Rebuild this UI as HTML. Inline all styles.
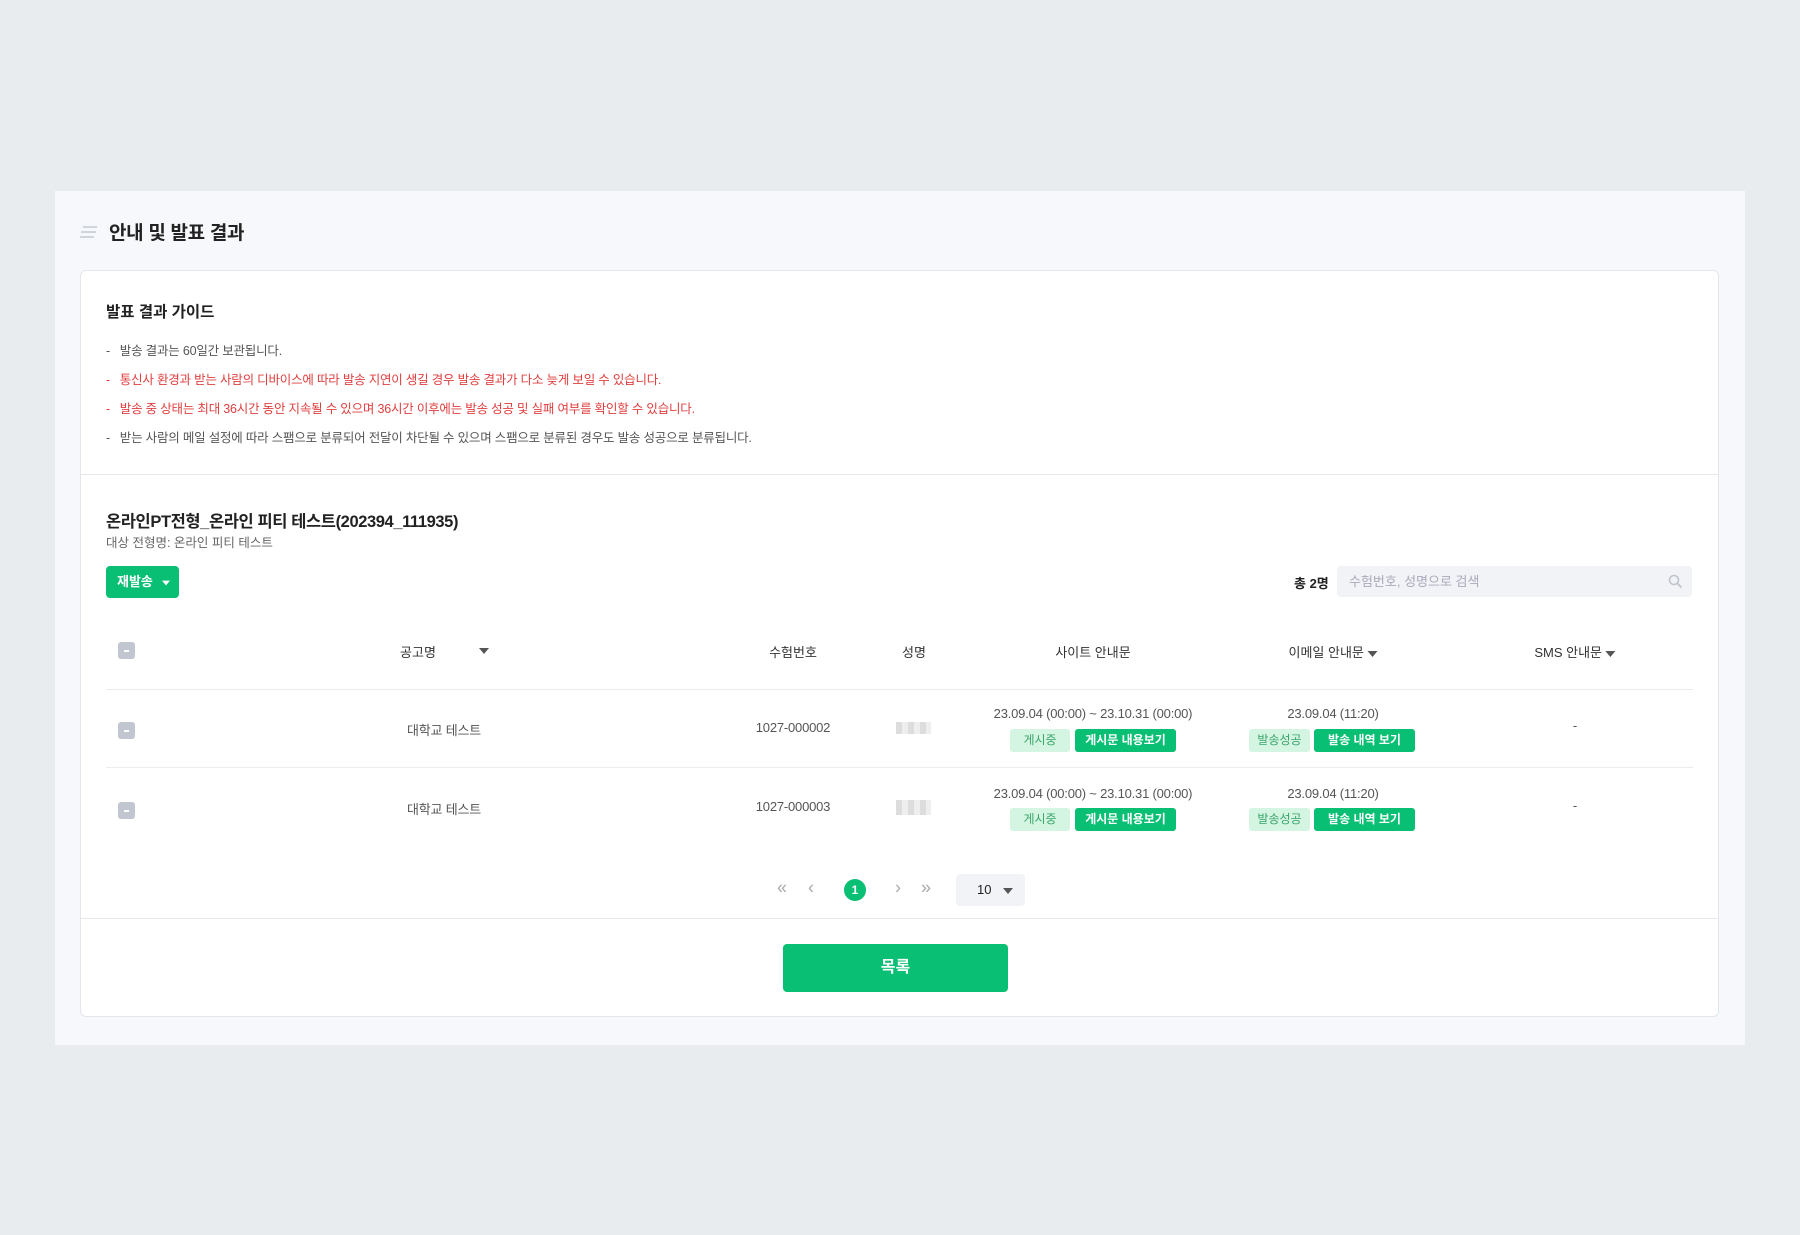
<!DOCTYPE html>
<html><head><meta charset="utf-8"><style>
*{box-sizing:border-box;margin:0;padding:0}
body{width:1800px;height:1235px;background:#e8ecef;font-family:"Liberation Sans","Noto Sans CJK KR",sans-serif;color:#222;position:relative;overflow:hidden}
.a{position:absolute;white-space:nowrap}
.panel{position:absolute;left:55px;top:191px;width:1690px;height:854px;background:#f6f8fb}
.card{position:absolute;left:80px;top:270px;width:1639px;height:747px;background:#fff;border:1px solid #e3e7ec;border-radius:6px}
.li{font-size:12.5px;color:#555;letter-spacing:-0.2px}
.red{color:#e03e3e}
.hd{font-size:13px;color:#333;transform:translateX(-50%)}
.cb{position:absolute;width:17px;height:17px;background:#c2c6d0;border-radius:3px}
.cb:after{content:"";position:absolute;left:6px;top:8px;width:5px;height:1.5px;background:#fff}
.c{transform:translateX(-50%);font-size:13px;color:#555;letter-spacing:-0.2px}
.b{position:absolute;height:23px;line-height:23px;font-size:12px;text-align:center;border-radius:3px}
.lt{background:#d4f5e2;color:#3aa46a}
.dk{background:#08bf73;color:#fff;font-weight:bold}
.tri{display:inline-block;width:0;height:0;border-left:5px solid transparent;border-right:5px solid transparent;border-top:6px solid #555;vertical-align:middle}
.pg{font-size:18px;color:#aaa;transform:translate(-50%,-50%)}
</style></head><body>
<div class="panel"></div>
<svg class="a" style="left:80px;top:226px" width="18" height="12"><path d="M3 1h14M1 6h15M0 11h14" stroke="#c4c9d2" stroke-width="1.6"/></svg>
<div class="a" style="left:109px;top:218px;font-size:19px;font-weight:bold;color:#222;letter-spacing:-0.3px">안내 및 발표 결과</div>
<div class="card"></div>
<div class="a" style="left:106px;top:300px;font-size:15.5px;font-weight:bold">발표 결과 가이드</div>
<div class="a li" style="left:106px;top:340px">-&nbsp;&nbsp; 발송 결과는 60일간 보관됩니다.</div>
<div class="a li red" style="left:106px;top:369px">-&nbsp;&nbsp; 통신사 환경과 받는 사람의 디바이스에 따라 발송 지연이 생길 경우 발송 결과가 다소 늦게 보일 수 있습니다.</div>
<div class="a li red" style="left:106px;top:398px">-&nbsp;&nbsp; 발송 중 상태는 최대 36시간 동안 지속될 수 있으며 36시간 이후에는 발송 성공 및 실패 여부를 확인할 수 있습니다.</div>
<div class="a li" style="left:106px;top:427px">-&nbsp;&nbsp; 받는 사람의 메일 설정에 따라 스팸으로 분류되어 전달이 차단될 수 있으며 스팸으로 분류된 경우도 발송 성공으로 분류됩니다.</div>
<div class="a" style="left:81px;top:474px;width:1637px;height:1px;background:#e6e8eb"></div>
<div class="a" style="left:106px;top:508px;font-size:16.5px;font-weight:bold;letter-spacing:-0.4px">온라인PT전형_온라인 피티 테스트(202394_111935)</div>
<div class="a" style="left:106px;top:532px;font-size:12.5px;color:#666">대상 전형명: 온라인 피티 테스트</div>
<div class="a" style="left:106px;top:566px;width:73px;height:32px;background:#08bf73;border-radius:4px;color:#fff;font-size:13px;line-height:32px;padding-left:11px;font-weight:bold">재발송 <span class="tri" style="border-top-color:#fff;margin-left:4px;transform:scale(.8)"></span></div>
<div class="a" style="left:1294px;top:573px;font-size:13px;font-weight:bold">총 2명</div>
<div class="a" style="left:1337px;top:566px;width:355px;height:31px;background:#f1f3f6;border-radius:4px;font-size:13px;color:#aab;line-height:31px;padding-left:12px">수험번호, 성명으로 검색</div>
<svg class="a" style="left:1668px;top:574px" width="15" height="15"><circle cx="6" cy="6" r="4.5" stroke="#c0c4cc" stroke-width="1.6" fill="none"/><path d="M9.5 9.5l4 4" stroke="#c0c4cc" stroke-width="1.8"/></svg>
<div class="cb" style="left:118px;top:642px"></div>
<div class="a hd" style="left:418px;top:642px">공고명</div><span class="a tri" style="left:479px;top:648px"></span>
<div class="a hd" style="left:793px;top:642px">수험번호</div>
<div class="a hd" style="left:914px;top:642px">성명</div>
<div class="a hd" style="left:1093px;top:642px">사이트 안내문</div>
<div class="a hd" style="left:1333px;top:642px">이메일 안내문 <span class="tri"></span></div>
<div class="a hd" style="left:1575px;top:642px">SMS 안내문 <span class="tri"></span></div>
<div class="a" style="left:106px;top:689px;width:1587px;height:1px;background:#eaecef"></div>
<div class="a" style="left:106px;top:767px;width:1587px;height:1px;background:#eaecef"></div>
<!-- row1 -->
<div class="cb" style="left:118px;top:722px"></div>
<div class="a c" style="left:444px;top:720px">대학교 테스트</div>
<div class="a c" style="left:793px;top:720px">1027-000002</div>
<div class="a" style="left:896px;top:722px;width:35px;height:12px;background:repeating-linear-gradient(90deg,#ddd 0 6px,#eee 6px 12px)"></div>
<div class="a c" style="left:1093px;top:706px">23.09.04 (00:00) ~ 23.10.31 (00:00)</div>
<div class="b lt" style="left:1010px;top:729px;width:60px">게시중</div>
<div class="b dk" style="left:1075px;top:729px;width:101px">게시문 내용보기</div>
<div class="a c" style="left:1333px;top:706px">23.09.04 (11:20)</div>
<div class="b lt" style="left:1249px;top:729px;width:61px">발송성공</div>
<div class="b dk" style="left:1314px;top:729px;width:101px">발송 내역 보기</div>
<div class="a c" style="left:1575px;top:718px">-</div>
<!-- row2 -->
<div class="cb" style="left:118px;top:802px"></div>
<div class="a c" style="left:444px;top:799px">대학교 테스트</div>
<div class="a c" style="left:793px;top:799px">1027-000003</div>
<div class="a" style="left:896px;top:800px;width:35px;height:15px;background:repeating-linear-gradient(90deg,#ddd 0 6px,#eee 6px 12px)"></div>
<div class="a c" style="left:1093px;top:786px">23.09.04 (00:00) ~ 23.10.31 (00:00)</div>
<div class="b lt" style="left:1010px;top:808px;width:60px">게시중</div>
<div class="b dk" style="left:1075px;top:808px;width:101px">게시문 내용보기</div>
<div class="a c" style="left:1333px;top:786px">23.09.04 (11:20)</div>
<div class="b lt" style="left:1249px;top:808px;width:61px">발송성공</div>
<div class="b dk" style="left:1314px;top:808px;width:101px">발송 내역 보기</div>
<div class="a c" style="left:1575px;top:798px">-</div>
<!-- pagination -->
<div class="a pg" style="left:782px;top:888px">«</div>
<div class="a pg" style="left:811px;top:888px">‹</div>
<div class="a" style="left:844px;top:879px;width:22px;height:22px;border-radius:50%;background:#08bf73;color:#fff;font-size:12px;text-align:center;line-height:22px;font-weight:bold">1</div>
<div class="a pg" style="left:898px;top:888px">›</div>
<div class="a pg" style="left:926px;top:888px">»</div>
<div class="a" style="left:956px;top:874px;width:69px;height:32px;background:#f1f3f6;border-radius:4px;font-size:13px;line-height:32px;padding-left:21px">10 <span class="tri" style="margin-left:8px"></span></div>
<div class="a" style="left:81px;top:918px;width:1637px;height:1px;background:#e6e8eb"></div>
<div class="a" style="left:783px;top:944px;width:225px;height:48px;background:#08bf73;border-radius:4px;color:#fff;font-size:16px;font-weight:bold;text-align:center;line-height:48px">목록</div>
</body></html>
